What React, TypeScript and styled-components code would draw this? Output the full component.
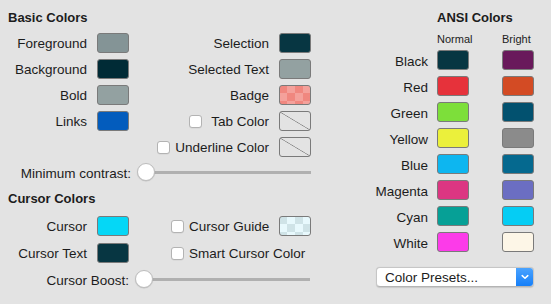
import React from "react";
import styled, { createGlobalStyle, css } from "styled-components";

const Global = createGlobalStyle`
  html, body { margin: 0; padding: 0; background: #e3e3e3; }
  body { font-family: "Liberation Sans", Arial, sans-serif; }
`;

const Window = styled.div`
  width: 551px;
  height: 304px;
  background: #e3e3e3;
  display: flex;
  color: #1c1c1c;
  font-size: 13.5px;
  overflow: hidden;
`;

const LeftPane = styled.div`
  width: 360px;
  display: flex;
  flex-direction: column;
  padding-top: 10px;
`;

const RightPane = styled.div`
  flex: 1;
  display: flex;
  flex-direction: column;
  padding-top: 10px;
`;

const Heading = styled.div<{ $indent: number; $top?: number }>`
  font-weight: bold;
  font-size: 13px;
  line-height: 16px;
  height: 16px;
  padding-left: ${(p) => p.$indent}px;
  margin-top: ${(p) => p.$top ?? 0}px;
  white-space: nowrap;
`;

const PrefGrid = styled.div<{ $top: number; $gap: number }>`
  display: grid;
  grid-template-columns: 97px 32px 150px 32px;
  grid-auto-rows: 20px;
  row-gap: ${(p) => p.$gap}px;
  margin-top: ${(p) => p.$top}px;
`;

const Label = styled.div<{ $col?: number; $span?: number; $align?: "end" | "start"; $gap?: number; $pl?: number }>`
  grid-column: ${(p) => (p.$col ? `${p.$col} / span ${p.$span ?? 1}` : "auto")};
  display: flex;
  align-items: center;
  justify-content: ${(p) => (p.$align === "start" ? "flex-start" : "flex-end")};
  gap: ${(p) => p.$gap ?? 6}px;
  padding-right: ${(p) => (p.$align === "start" ? 0 : 10)}px;
  padding-left: ${(p) => p.$pl ?? 0}px;
  padding-top: 2px;
  white-space: nowrap;
  line-height: 16px;
`;

type Pattern = "none" | "pink" | "ice";

const patternCss = {
  none: css`
    background: linear-gradient(
      to top right,
      transparent calc(50% - 0.7px),
      #8a8a8a 50%,
      transparent calc(50% + 0.7px)
    );
  `,
  pink: css`
    background: repeating-conic-gradient(#f4a19b 0 25%, #f0877f 0 50%) -1px -1px / 16px 16px;
  `,
  ice: css`
    background: repeating-conic-gradient(#e8f9fd 0 25%, #cfe3e7 0 50%) -1px -1px / 16px 16px;
  `,
};

const Swatch = styled.div<{ $color?: string; $pattern?: Pattern; $col?: number }>`
  grid-column: ${(p) => p.$col ?? "auto"};
  width: 32px;
  height: 20px;
  box-sizing: border-box;
  border: 1px solid #7a7a7a;
  border-radius: 3px;
  background: ${(p) => p.$color ?? "transparent"};
  ${(p) => (p.$pattern ? patternCss[p.$pattern] : "")}
`;

const Check = styled.span`
  display: inline-block;
  width: 13px;
  height: 13px;
  margin-top: -2px;
  box-sizing: border-box;
  border: 1px solid #b3b3b3;
  border-radius: 3px;
  background: #fff;
  box-shadow: 0 0.5px 0.5px rgba(0, 0, 0, 0.08);
  flex: none;
`;

const SliderRow = styled.div<{ $top: number; $labelWidth: number }>`
  display: flex;
  align-items: center;
  height: 20px;
  margin-top: ${(p) => p.$top}px;
  & > span {
    width: ${(p) => p.$labelWidth}px;
    text-align: right;
    white-space: nowrap;
    margin-right: 6px;
    padding-top: 2px;
  }
`;

const Slider = styled.div<{ $width: number }>`
  width: ${(p) => p.$width}px;
  height: 18px;
  display: flex;
  align-items: center;
  background: linear-gradient(#b0b0b0, #b0b0b0) no-repeat right center / calc(100% - 9px) 3px;
`;

const Knob = styled.div`
  width: 18px;
  height: 18px;
  box-sizing: border-box;
  border-radius: 50%;
  background: #fff;
  border: 1px solid #bdbdbd;
  box-shadow: 0 0.5px 1px rgba(0, 0, 0, 0.15);
`;

const SubHeader = styled.div`
  display: flex;
  margin-top: 6px;
  height: 14px;
  line-height: 14px;
  font-size: 11px;
  padding-left: 77px;
  & > span:first-child {
    width: 65px;
  }
`;

const AnsiGrid = styled.div`
  display: grid;
  grid-template-columns: 77px 32px 33px 32px;
  grid-auto-rows: 20px;
  row-gap: 6px;
  margin-top: 4px;
`;

const AnsiLabel = styled.div`
  display: flex;
  align-items: center;
  justify-content: flex-end;
  padding-right: 9px;
  padding-top: 2px;
  white-space: nowrap;
`;

const Gap = styled.div``;

const Dropdown = styled.div`
  margin: 15px 0 0 16px;
  width: 158px;
  height: 20px;
  box-sizing: border-box;
  display: flex;
  align-items: stretch;
  background: #fff;
  border: 1px solid #c6c6c6;
  border-bottom-color: #b4b4b4;
  border-radius: 4px;
  box-shadow: 0 0.5px 1px rgba(0, 0, 0, 0.12);
  overflow: hidden;
`;

const DropdownText = styled.div`
  flex: 1;
  display: flex;
  align-items: center;
  padding-left: 8px;
  white-space: nowrap;
`;

const DropdownArrow = styled.div`
  width: 17px;
  display: flex;
  align-items: center;
  justify-content: center;
  background: linear-gradient(#4aa3ff, #167ff8);
`;

const ansi: [string, string, string][] = [
  ["Black", "#073642", "#69195b"],
  ["Red", "#e6323b", "#d34b24"],
  ["Green", "#7ddf3a", "#02516f"],
  ["Yellow", "#ebf03b", "#8b8b8b"],
  ["Blue", "#0db6f0", "#05698f"],
  ["Magenta", "#dc3682", "#6b6ec2"],
  ["Cyan", "#06a096", "#05cdf4"],
  ["White", "#fc3be9", "#fdf6e7"],
];

export default function App() {
  return (
    <>
      <Global />
      <Window>
        <LeftPane>
          <Heading $indent={8}>Basic Colors</Heading>
          <PrefGrid $top={7} $gap={6}>
            <Label>Foreground</Label>
            <Swatch $color="#849496" />
            <Label>Selection</Label>
            <Swatch $color="#073642" />

            <Label>Background</Label>
            <Swatch $color="#002b36" />
            <Label>Selected Text</Label>
            <Swatch $color="#93a1a1" />

            <Label>Bold</Label>
            <Swatch $color="#93a1a1" />
            <Label>Badge</Label>
            <Swatch $pattern="pink" />

            <Label>Links</Label>
            <Swatch $color="#035cbd" />
            <Label $gap={9}>
              <Check />
              Tab Color
            </Label>
            <Swatch $pattern="none" />

            <Label $col={3} $gap={5}>
              <Check />
              Underline Color
            </Label>
            <Swatch $pattern="none" />
          </PrefGrid>

          <SliderRow $top={5} $labelWidth={131}>
            <span>Minimum contrast:</span>
            <Slider $width={174}>
              <Knob />
            </Slider>
          </SliderRow>

          <Heading $indent={8} $top={9}>
            Cursor Colors
          </Heading>
          <PrefGrid $top={9} $gap={7}>
            <Label>Cursor</Label>
            <Swatch $color="#05d7f6" />
            <Label $align="start" $pl={42} $gap={5}>
              <Check />
              Cursor Guide
            </Label>
            <Swatch $pattern="ice" />

            <Label>Cursor Text</Label>
            <Swatch $color="#073642" />
            <Label $align="start" $pl={42} $gap={5} $col={3} $span={2}>
              <Check />
              Smart Cursor Color
            </Label>
          </PrefGrid>

          <SliderRow $top={6} $labelWidth={129}>
            <span>Cursor Boost:</span>
            <Slider $width={175}>
              <Knob />
            </Slider>
          </SliderRow>
        </LeftPane>

        <RightPane>
          <Heading $indent={77}>ANSI Colors</Heading>
          <SubHeader>
            <span>Normal</span>
            <span>Bright</span>
          </SubHeader>
          <AnsiGrid>
            {ansi.map(([name, normal, bright]) => (
              <React.Fragment key={name}>
                <AnsiLabel>{name}</AnsiLabel>
                <Swatch $color={normal} />
                <Gap />
                <Swatch $color={bright} />
              </React.Fragment>
            ))}
          </AnsiGrid>
          <Dropdown>
            <DropdownText>Color Presets...</DropdownText>
            <DropdownArrow>
              <svg width="8" height="6" viewBox="0 0 8 6">
                <path d="M1.2 1.6 L4 4.3 L6.8 1.6" fill="none" stroke="#fff" strokeWidth="1.5" strokeLinecap="round" strokeLinejoin="round" />
              </svg>
            </DropdownArrow>
          </Dropdown>
        </RightPane>
      </Window>
    </>
  );
}
